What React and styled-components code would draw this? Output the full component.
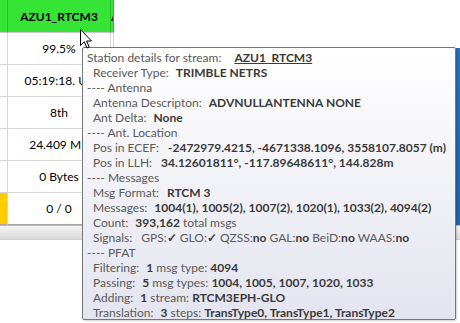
import React from 'react';
import styled, { createGlobalStyle } from 'styled-components';

const GlobalStyle = createGlobalStyle`
  html, body {
    margin: 0;
    padding: 0;
    background: #ffffff;
  }
  body {
    font-family: Lato, "Liberation Sans", sans-serif;
  }
`;

const Page = styled.div`
  position: relative;
  width: 460px;
  height: 323px;
  overflow: hidden;
  display: flex;
  flex-direction: column;
  background: #ffffff;
`;

const Top = styled.div`
  display: flex;
  height: 225px;
`;

const Table = styled.div`
  display: grid;
  grid-template-columns: 8px 103px 3px;
  grid-template-rows: 33px repeat(6, 32px);
  width: 114px;
  flex: none;
`;

const Cell = styled.div`
  box-sizing: border-box;
  display: flex;
  align-items: center;
  justify-content: ${props => props.$left ? 'flex-start' : 'center'};
  border-right: 1px solid ${props => props.$head ? '#2cc02c' : '#d6d6d6'};
  border-bottom: 1px solid ${props => props.$last ? '#a8a8a8' : props.$head ? '#c8c8c8' : '#d6d6d6'};
  background: ${props => props.$head ? '#36e436' : props.$tint || '#ffffff'};
  font-size: 12px;
  font-weight: ${props => props.$head ? 700 : 400};
  color: #000000;
  white-space: nowrap;
  overflow: ${props => props.$left ? 'hidden' : 'visible'};
`;

const Strip = styled.div`
  margin-left: auto;
  margin-top: 48px;
  width: 4px;
  background: linear-gradient(#2a6fbd, #1f63ad);
`;

const ScrollBar = styled.div`
  box-sizing: border-box;
  height: 15px;
  border-top: 1px solid #b9b9b9;
  border-bottom: 1px solid #cfcfcf;
  background: linear-gradient(#f4f4f4, #dadada);
`;

const Tip = styled.div`
  position: absolute;
  left: 82px;
  top: 47px;
  width: 374px;
  height: 273px;
  box-sizing: border-box;
  padding: 2px 4px 0 4px;
  border: 1px solid #767676;
  border-radius: 2px;
  background: linear-gradient(#ffffff, #e3e4ee);
  box-shadow: 1px 1px 2px rgba(0, 0, 0, 0.18);
  font-size: 12px;
  line-height: 15px;
  color: #5a5a5a;
  white-space: pre;
`;

const Line = styled.div`
  padding-left: ${props => props.$sub ? '6px' : '0'};
`;

const Label = styled.span`
  margin-right: ${props => props.$gap || 7}px;
`;

const B = styled.b`
  font-weight: 700;
  color: #3a3a3a;
  text-decoration: ${props => props.$u ? 'underline' : 'none'};
`;

const Cursor = styled.svg`
  position: absolute;
  left: 80px;
  top: 29px;
  z-index: 5;
`;

const rows = [
  { text: '99.5%' },
  { text: '05:19:18. Up' },
  { text: '8th' },
  { text: '24.409 MB' },
  { text: '0 Bytes' },
  { text: '0 / 0', tint: '#ffcc00' },
];

const App = () => (
  <Page>
    <GlobalStyle />
    <Top>
      <Table>
        <Cell $head />
        <Cell $head>AZU1_RTCM3</Cell>
        <Cell $head $left>A</Cell>
        {rows.map((row, i) => (
          <React.Fragment key={i}>
            <Cell $tint={row.tint} $last={i === rows.length - 1} />
            <Cell $last={i === rows.length - 1}>{row.text}</Cell>
            <Cell $left $last={i === rows.length - 1} />
          </React.Fragment>
        ))}
      </Table>
      <Strip />
    </Top>
    <ScrollBar />

    <Tip>
      <Line><Label $gap={13}>Station details for stream:</Label><B $u>AZU1_RTCM3</B></Line>
      <Line $sub><Label>Receiver Type:</Label><B>TRIMBLE NETRS</B></Line>
      <Line>---- Antenna</Line>
      <Line $sub><Label>Antenna Descripton:</Label><B>ADVNULLANTENNA NONE</B></Line>
      <Line $sub><Label>Ant Delta:</Label><B>None</B></Line>
      <Line>---- Ant. Location</Line>
      <Line $sub><Label $gap={9}>Pos in ECEF:</Label><B>-2472979.4215, -4671338.1096, 3558107.8057 (m)</B></Line>
      <Line $sub><Label $gap={9}>Pos in LLH:</Label><B>34.12601811°, -117.89648611°, 144.828m</B></Line>
      <Line>---- Messages</Line>
      <Line $sub><Label $gap={8}>Msg Format:</Label><B>RTCM 3</B></Line>
      <Line $sub><Label>Messages:</Label><B>1004(1), 1005(2), 1007(2), 1020(1), 1033(2), 4094(2)</B></Line>
      <Line $sub><Label>Count:</Label><B>393,162</B> total msgs</Line>
      <Line $sub>
        <Label $gap={9}>Signals:</Label>GPS:<B>✓</B> GLO:<B>✓</B> QZSS:<B>no</B> GAL:<B>no</B> BeiD:<B>no</B> WAAS:<B>no</B>
      </Line>
      <Line>---- PFAT</Line>
      <Line $sub><Label>Filtering:</Label><B>1</B> msg type: <B>4094</B></Line>
      <Line $sub><Label>Passing:</Label><B>5</B> msg types: <B>1004, 1005, 1007, 1020, 1033</B></Line>
      <Line $sub><Label>Adding:</Label><B>1</B> stream: <B>RTCM3EPH-GLO</B></Line>
      <Line $sub><Label>Translation:</Label><B>3</B> steps: <B>TransType0, TransType1, TransType2</B></Line>
    </Tip>

    <Cursor width="13" height="21" viewBox="0 0 13 21">
      <path
        d="M0.5 0.5 V16.5 L4.3 12.8 L7 19 L9.2 18 L6.6 12 H11.5 Z"
        fill="#ffffff"
        stroke="#000000"
        strokeWidth="1"
        strokeLinejoin="miter"
      />
    </Cursor>
  </Page>
);

export default App;
